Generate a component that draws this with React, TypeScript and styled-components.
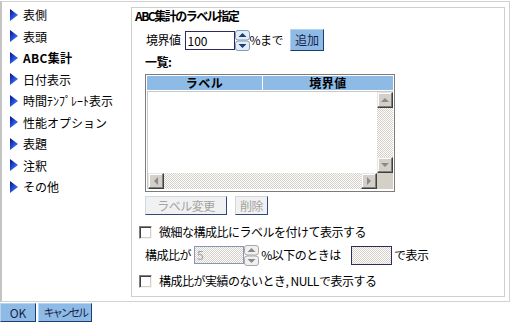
import React from "react";
import styled, { createGlobalStyle, css } from "styled-components";

const Global = createGlobalStyle`
  html, body { margin: 0; padding: 0; background: #fff; }
  body {
    font-family: "Noto Sans CJK JP", "DejaVu Sans", sans-serif;
    font-size: 12px;
    color: #000;
  }
  * { box-sizing: border-box; }
`;

const dither = css`
  background-color: #fff;
  background-image: repeating-conic-gradient(#d4d0c8 0 25%, #ffffff 0 50%);
  background-size: 2px 2px;
`;

const Frame = styled.div`
  margin-top: 1px;
  width: 510px;
  height: 301px;
  border: 1px solid #d2d2d2;
  border-left: 2px solid #c4c4c4;
  display: flex;
`;

const Nav = styled.ul`
  list-style: none;
  margin: 0;
  padding: 2px 0 0 8px;
  width: 129px;
  flex: none;
`;

const NavItem = styled.li<{ $active?: boolean }>`
  height: 21.5px;
  display: flex;
  align-items: center;
  gap: 5px;
  font-size: 12px;
  font-weight: ${(p) => (p.$active ? 700 : 400)};
  white-space: nowrap;
  letter-spacing: ${(p) => (p.$active ? "0.3px" : "0")};
`;

const Content = styled.section`
  flex: 1;
  margin: 5px 4px 4px 0;
  border: 1px solid #cfcfcf;
  padding: 1px 0 0 3px;
  display: flex;
  flex-direction: column;
  letter-spacing: -0.5px;
`;

const Title = styled.div`
  height: 14px;
  line-height: 14px;
  font-weight: 700;
  letter-spacing: -1.5px;
`;

const Row = styled.div<{ $top: number; $left: number; $h: number }>`
  display: flex;
  align-items: center;
  margin-top: ${(p) => p.$top}px;
  margin-left: ${(p) => p.$left}px;
  height: ${(p) => p.$h}px;
  white-space: nowrap;
`;

const Label = styled.span<{ $gap?: number }>`
  margin-right: ${(p) => p.$gap ?? 0}px;
  line-height: 14px;
`;

const Bold = styled.div`
  margin-top: 4px;
  margin-left: 10px;
  height: 14px;
  line-height: 14px;
  font-weight: 700;
`;

const TextInput = styled.div<{ $w: number; $h: number; $disabled?: boolean; $dark?: boolean }>`
  width: ${(p) => p.$w}px;
  height: ${(p) => p.$h}px;
  border: 1px solid ${(p) => (p.$disabled ? "#8a96b8" : "#2c2c5c")};
  ${(p) => (p.$disabled || p.$dark ? dither : "background: #fff;")}
  color: ${(p) => (p.$disabled ? "#a0a0a0" : "#000")};
  padding-left: 2px;
  line-height: ${(p) => p.$h - 2}px;
  font-size: 12px;
  letter-spacing: 0;
`;

const BlueButton = styled.button<{ $w: number; $h: number; $tight?: boolean }>`
  width: ${(p) => p.$w}px;
  height: ${(p) => p.$h}px;
  padding: 0;
  font-family: inherit;
  font-size: ${(p) => (p.$tight ? 11 : 12)}px;
  letter-spacing: ${(p) => (p.$tight ? "-2.4px" : "0")};
  line-height: 1;
  color: #1a1f4a;
  background: #8dbbe6;
  border: 1px solid;
  border-color: #b7d3ef #1d3c70 #1d3c70 #b7d3ef;
`;

const GrayButton = styled.button<{ $w: number }>`
  width: ${(p) => p.$w}px;
  height: 19px;
  padding: 0;
  font-family: inherit;
  font-size: 12px;
  letter-spacing: -0.5px;
  line-height: 1;
  color: #a2a2a2;
  background: #f1f1f1;
  border: 1px solid;
  border-color: #cfd7e2 #2a4a7e #2a4a7e #cfd7e2;
`;

const Table = styled.div`
  margin-top: 5px;
  margin-left: 10px;
  width: 250px;
  height: 118px;
  border: 1px solid #7c7c7c;
  padding: 1px;
  background: #fff;
  display: flex;
  flex-direction: column;
`;

const Header = styled.div`
  height: 14px;
  display: grid;
  grid-template-columns: 115px 130px;
  column-gap: 1px;
  background: #fff;
`;

const HeadCell = styled.div`
  background: #8dbbe6;
  text-align: center;
  font-weight: 700;
  line-height: 14px;
  letter-spacing: 0.5px;
`;

const Body = styled.div`
  margin-top: 1px;
  height: 98px;
  display: grid;
  grid-template-columns: 1fr 16px;
  grid-template-rows: 1fr 16px;
  border-left: 1px solid #c8c8c8;
  border-top: 1px solid #c8c8c8;
`;

const VScroll = styled.div`
  display: flex;
  flex-direction: column;
`;

const HScroll = styled.div`
  display: flex;
`;

const Track = styled.div`
  flex: 1;
  ${dither}
`;

const SBtn = styled.div`
  width: 16px;
  height: 16px;
  flex: none;
  background: #d4d0c8;
  border: 1px solid;
  border-color: #e8e6e2 #404040 #404040 #e8e6e2;
  box-shadow: inset -1px -1px #808080, inset 1px 1px #fff;
  display: flex;
  align-items: center;
  justify-content: center;
`;

const Corner = styled.div`
  background: #d4d0c8;
`;

const BtnRow = styled.div`
  margin-top: 4px;
  margin-left: 10px;
  display: flex;
  gap: 8px;
`;

const Check = styled.span`
  width: 13px;
  height: 13px;
  flex: none;
  background: #fff;
  border: 1px solid;
  border-color: #808080 #f4f4f4 #f4f4f4 #808080;
  box-shadow: inset 1px 1px #404040, inset -1px -1px #d4d0c8;
  margin-right: 7px;
`;

const Footer = styled.div`
  margin-top: 1px;
  display: flex;
  gap: 2px;
`;

const Tri = () => (
  <svg width="8" height="12" viewBox="0 0 8 12">
    <defs>
      <linearGradient id="tg" x1="0" y1="0" x2="1" y2="1">
        <stop offset="0" stopColor="#00108a" />
        <stop offset="0.6" stopColor="#2f5ce8" />
        <stop offset="1" stopColor="#5a86ff" />
      </linearGradient>
    </defs>
    <polygon points="0,0 8,6 0,12" fill="url(#tg)" />
  </svg>
);

const Spinner = ({ disabled }: { disabled?: boolean }) => {
  const stroke = disabled ? "#a8a8a8" : "#7f9db9";
  const fill = disabled ? "#f0f0f0" : "#e4ecf6";
  const arrow = disabled ? "#8a8a8a" : "#1a3c78";
  return (
    <svg width="15" height="21" viewBox="0 0 15 21">
      <rect x="0.5" y="0.5" width="14" height="9.5" rx="2.5" fill={fill} stroke={stroke} />
      <rect x="0.5" y="11" width="14" height="9.5" rx="2.5" fill={fill} stroke={stroke} />
      <polygon points="3.5,7 11.5,7 7.5,3" fill={arrow} />
      <polygon points="3.5,14 11.5,14 7.5,18" fill={arrow} />
    </svg>
  );
};

const Arrow = ({ dir }: { dir: "up" | "down" | "left" | "right" }) => {
  const pts = {
    up: "1,5 9,5 5,1",
    down: "1,1 9,1 5,5",
    left: "5,1 5,9 1,5",
    right: "1,1 1,9 5,5",
  }[dir];
  const vert = dir === "up" || dir === "down";
  return (
    <svg width={vert ? 10 : 6} height={vert ? 6 : 10} viewBox={vert ? "0 0 10 6" : "0 0 6 10"}>
      <polygon points={pts} fill="#8a8a8a" />
    </svg>
  );
};

const navItems = ["表側", "表頭", "ABC集計", "日付表示", "時間ﾃﾝﾌﾟﾚｰﾄ表示", "性能オプション", "表題", "注釈", "その他"];

export default function App() {
  return (
    <>
      <Global />
      <Frame>
        <Nav>
          {navItems.map((t) => (
            <NavItem key={t} $active={t === "ABC集計"}>
              <Tri />
              {t}
            </NavItem>
          ))}
        </Nav>
        <Content>
          <Title>ABC集計のラベル指定</Title>
          <Row $top={6} $left={11} $h={22}>
            <Label $gap={4}>境界値</Label>
            <TextInput $w={50} $h={19}>100</TextInput>
            <Spinner />
            <Label $gap={7}>%まで</Label>
            <BlueButton $w={34} $h={22}>追加</BlueButton>
          </Row>
          <Bold>一覧:</Bold>
          <Table>
            <Header>
              <HeadCell>ラベル</HeadCell>
              <HeadCell>境界値</HeadCell>
            </Header>
            <Body>
              <div />
              <VScroll>
                <SBtn><Arrow dir="up" /></SBtn>
                <Track />
                <SBtn><Arrow dir="down" /></SBtn>
              </VScroll>
              <HScroll>
                <SBtn><Arrow dir="left" /></SBtn>
                <Track />
                <SBtn><Arrow dir="right" /></SBtn>
              </HScroll>
              <Corner />
            </Body>
          </Table>
          <BtnRow>
            <GrayButton $w={82}>ラベル変更</GrayButton>
            <GrayButton $w={33}>削除</GrayButton>
          </BtnRow>
          <Row $top={9} $left={4} $h={16}>
            <Check />
            <Label>微細な構成比にラベルを付けて表示する</Label>
          </Row>
          <Row $top={5} $left={10} $h={20}>
            <Label $gap={3}>構成比が</Label>
            <TextInput $w={50} $h={18} $disabled>5</TextInput>
            <Spinner disabled />
            <Label $gap={10}>&nbsp;%以下のときは</Label>
            <TextInput $w={41} $h={19} $dark />
            <Label>&nbsp;で表示</Label>
          </Row>
          <Row $top={8} $left={4} $h={16}>
            <Check />
            <Label>構成比が実績のないとき, NULLで表示する</Label>
          </Row>
        </Content>
      </Frame>
      <Footer>
        <BlueButton $w={36} $h={19}>OK</BlueButton>
        <BlueButton $w={54} $h={19} $tight>キャンセル</BlueButton>
      </Footer>
    </>
  );
}
